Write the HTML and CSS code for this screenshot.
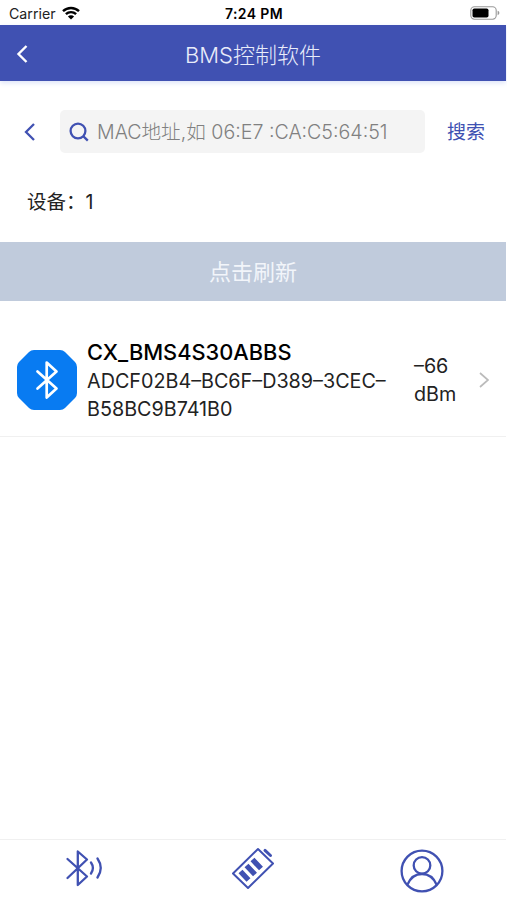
FILE: index.html
```
<!DOCTYPE html>
<html lang="zh-CN">

<head>
  <meta charset="utf-8">
  <meta name="viewport" content="width=device-width, initial-scale=1.0">
  <title>BMS控制软件</title>
  <link rel="stylesheet" href="styles.css">
</head>

<body>
  <div class="app">
    <div class="status-bar">
      <div class="carrier">
        <span>Carrier</span>
        <svg class="wifi" viewBox="0 0 18 14" width="18" height="14">
          <path d="M1 5.2a11.5 11.5 0 0 1 16 0M3.9 8.2a7.3 7.3 0 0 1 10.2 0" fill="none" stroke="#000" stroke-width="2.4" />
          <path d="M9 13.6L5.9 10.5a4.4 4.4 0 0 1 6.2 0z" />
        </svg>
      </div>
      <div class="time">7:24 PM</div>
      <svg class="battery" viewBox="0 0 30 14" width="30" height="14">
        <rect x=".8" y=".8" width="25.4" height="12.4" rx="3.6" fill="#fff" stroke="#999" stroke-width="1.1" />
        <rect x="2.5" y="2.4" width="16" height="9.2" rx="1.8" />
        <path d="M27.6 4.8q1.8.6 1.8 2.2t-1.8 2.2z" fill="#999" />
      </svg>
    </div>

    <header class="header">
      <svg class="header-back" viewBox="0 0 12 20" width="12" height="20">
        <path d="M10.5 2L2.5 10L10.5 18" />
      </svg>
      <h1 class="header-title">BMS控制软件</h1>
    </header>

    <div class="search">
      <svg class="search-back" viewBox="0 0 12 20" width="12" height="20">
        <path d="M10 2L2 10L10 18" />
      </svg>
      <div class="search-box">
        <svg viewBox="0 0 20 20" width="20" height="20">
          <circle cx="9" cy="9" r="7.4" />
          <path d="M14.2 14.2L18.8 18.6" />
        </svg>
        <span class="placeholder">MAC地址,如 06:E7 :CA:C5:64:51</span>
      </div>
      <div class="search-button">搜索</div>
    </div>

    <div class="count">设备：<span>1</span></div>
    <div class="refresh">点击刷新</div>

    <div class="device">
      <svg class="device-icon" viewBox="0 0 60 60" width="60" height="60">
        <path d="M17 0H43Q46 0 48 2L58 12Q60 14 60 17V43Q60 46 58 48L48 58Q46 60 43 60H17Q14 60 12 58L2 48Q0 46 0 43V17Q0 14 2 12L12 2Q14 0 17 0Z" fill="#087bf2" />
        <path d="M20.5 21.5L39.5 38.5L29.7 47.5V12.5L39.5 21.5L20.5 38.5" fill="none" stroke="#fff" stroke-width="2.7" stroke-linecap="round" stroke-linejoin="round" />
      </svg>
      <div class="device-info">
        <div class="device-name">CX_BMS4S30ABBS</div>
        <div class="device-mac">ADCF02B4–BC6F–D389–3CEC–<br>B58BC9B741B0</div>
      </div>
      <div class="device-signal">–66<br>dBm</div>
      <svg class="device-arrow" viewBox="0 0 10 16" width="10" height="16">
        <path d="M1 1L9 8L1 15" />
      </svg>
    </div>

    <nav class="tabs">
      <div class="tab">
        <svg viewBox="0 0 40 44" width="40" height="44">
          <path d="M3.5 12L23 29.5L13.8 38V4.5L23 12.5L3.5 31" />
          <path d="M27 15.5Q30.8 21 27 26.5M33.5 11.5Q40 21 33.5 30.5" />
        </svg>
      </div>
      <div class="tab">
        <svg viewBox="0 0 44 44" width="44" height="44">
          <path d="M27 2L42 16.5L17 41L2 26.5Z" stroke-width="2" />
          <path d="M34 3.4L39.5 8.5" stroke-width="3" />
          <path d="M9.5 24.5L17.5 33M15.5 18.5L24 27.5M21.5 12.5L30 21.5" stroke-width="5.4" stroke-linecap="butt" />
        </svg>
      </div>
      <div class="tab tab-user">
        <svg viewBox="0 0 44 44" width="44" height="44">
          <circle cx="22" cy="22" r="20.4" />
          <circle cx="22" cy="16.4" r="8.3" />
          <path d="M7.5 35.5Q12 25 22 25T36.5 35.5" />
        </svg>
      </div>
    </nav>
  </div>
</body>

</html>
```
FILE: styles.css
```
body,
html {
  margin: 0;
  padding: 0;
  height: 100%;
  background: #fff;
  font-family: Inter, "Noto Sans CJK SC", sans-serif;
  overflow: hidden;
}

.app {
  display: flex;
  flex-direction: column;
  width: 506px;
  height: 100%;
  color: #222;
}

.status-bar {
  display: grid;
  grid-template-columns: 1fr auto 1fr;
  align-items: center;
  height: 25px;
  padding: 1px 6px 0 8px;
  box-sizing: border-box;
  font-size: 14.2px;
}

.carrier {
  display: flex;
  align-items: center;
  gap: 6px;
  margin-left: 1px;
}

.time {
  color: #000;
  font-size: 14px;
  font-weight: 600;
  letter-spacing: 0.4px;
}

.battery {
  justify-self: end;
}

.header {
  display: grid;
  grid-template-columns: 40px 1fr 40px;
  align-items: center;
  height: 56px;
  background: #4051b2;
  box-shadow: 0 2px 5px #dce3f8;
}

.header-back {
  margin: 2px 0 0 16px;
  fill: none;
  stroke: #fff;
  stroke-width: 2.4;
}

.header-title {
  margin: 0;
  color: #e9ecfa;
  font-size: 22px;
  font-weight: 300;
  text-align: center;
}

.search {
  display: flex;
  align-items: center;
  height: 43px;
  margin-top: 29px;
  padding: 0 21px 0 24px;
}

.search-back {
  fill: none;
  stroke: #4051b2;
  stroke-width: 2.3;
}

.search-box {
  display: flex;
  align-items: center;
  gap: 8px;
  width: 365px;
  height: 43px;
  margin-left: 24px;
  padding-left: 9px;
  box-sizing: border-box;
  border-radius: 5px;
  background: #f4f4f4;
}

.search-box svg {
  fill: none;
  stroke: #4051b2;
  stroke-width: 2.3;
}

.placeholder {
  padding-bottom: 3px;
  color: #808080;
  font-size: 19.6px;
  font-weight: 300;
  white-space: nowrap;
}

.search-button {
  margin-left: auto;
  padding-bottom: 2px;
  color: #4051b2;
  font-size: 19px;
}

.count {
  height: 28px;
  margin-top: 35px;
  padding-left: 27px;
  font-size: 19.5px;
  line-height: 28px;
}

.refresh {
  height: 59px;
  margin-top: 26px;
  background: #c0cbdc;
  color: #f2f5fa;
  font-size: 22px;
  line-height: 61px;
  text-align: center;
}

.device {
  display: flex;
  align-items: center;
  height: 136px;
  padding: 22px 17px 0;
  box-sizing: border-box;
  border-bottom: 1px solid #f0f0f0;
}

.device-info {
  width: 327px;
  margin-left: 10px;
  white-space: nowrap;
}

.device-name {
  color: #000;
  font-size: 21.8px;
  font-weight: 500;
  line-height: 30px;
}

.device-mac,
.device-signal {
  font-size: 19.75px;
  line-height: 28px;
}

.device-arrow {
  margin-left: auto;
  fill: none;
  stroke: #bbb;
  stroke-width: 1.7;
}

.tabs {
  display: grid;
  grid-template-columns: repeat(3, 1fr);
  height: 61px;
  margin-top: auto;
  box-sizing: border-box;
  border-top: 1px solid #f0f0f0;
}

.tab {
  display: flex;
  justify-content: center;
  padding-top: 7px;
}

.tab-user {
  padding-top: 9px;
}

.tab svg {
  fill: none;
  stroke: #4051b2;
  stroke-width: 2.3;
  stroke-linecap: round;
  stroke-linejoin: round;
}
```
